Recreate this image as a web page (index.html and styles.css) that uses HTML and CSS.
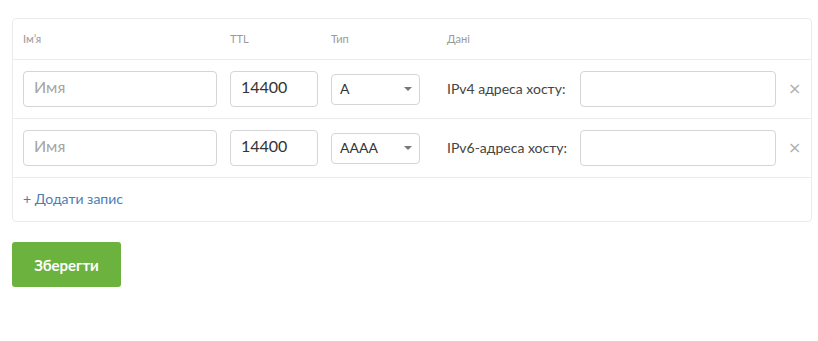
FILE: index.html
```html
<!DOCTYPE html>
<html>
<head>
  <meta charset="utf-8">
  <link rel="stylesheet" href="styles.css">
</head>
<body>
  <div class="records">
    <div class="records-head">
      <span>Ім’я</span>
      <span>TTL</span>
      <span>Тип</span>
      <span class="data-col">Дані</span>
    </div>

    <div class="record-row">
      <input class="field" type="text" placeholder="Имя">
      <input class="field" type="text" value="14400">
      <div class="type-select"><span>A</span><i class="caret"></i></div>
      <label class="data-label">IPv4 адреса хосту:</label>
      <input class="field" type="text">
      <button class="remove-btn">×</button>
    </div>

    <div class="record-row">
      <input class="field" type="text" placeholder="Имя">
      <input class="field" type="text" value="14400">
      <div class="type-select"><span>AAAA</span><i class="caret"></i></div>
      <label class="data-label">IPv6-адреса хосту:</label>
      <input class="field" type="text">
      <button class="remove-btn">×</button>
    </div>

    <div class="records-foot">
      <a class="add-link" href="#">+ Додати запис</a>
    </div>
  </div>

  <button class="save-btn">Зберегти</button>
</body>
</html>
```

FILE: styles.css
```css
body {
  font-family: Lato, "Open Sans", sans-serif;
  margin: 0;
  padding: 18px 6px 0 12px;
  background: #fff;
  color: #333;
}

.records {
  width: 800px;
  border: 1px solid #ebebeb;
  border-radius: 4px;
  box-sizing: border-box;
}

.records-head,
.record-row {
  display: grid;
  grid-template-columns: 194px 88px 89px 134px 196px 1fr;
  column-gap: 13px;
  align-items: center;
  padding: 0 0 0 10px;
  border-bottom: 1px solid #ebebeb;
}

.records-head {
  height: 41px;
  font-size: 11px;
  color: #9a9a9a;
  padding-bottom: 1px;
  box-sizing: border-box;
}

.data-col {
  padding-left: 14px;
}

.record-row {
  height: 58px;
}

.field {
  height: 36px;
  border: 1px solid #d5d5d5;
  border-radius: 4px;
  box-sizing: border-box;
  padding: 0 10px 6px;
  font-family: inherit;
  font-size: 16px;
  color: #333;
  outline: none;
}

.field::placeholder {
  color: #a5a5a5;
}

.type-select {
  height: 31px;
  border: 1px solid #d5d5d5;
  border-radius: 4px;
  box-sizing: border-box;
  display: flex;
  align-items: center;
  justify-content: space-between;
  padding: 0 7px 2px 8px;
  font-size: 14px;
  color: #333;
}

.caret {
  width: 0;
  height: 0;
  margin-top: 2px;
  border-left: 4px solid transparent;
  border-right: 4px solid transparent;
  border-top: 4px solid #777;
}

.data-label {
  padding-left: 14px;
  padding-bottom: 2px;
  font-size: 14px;
  color: #444;
}

.remove-btn {
  justify-self: start;
  margin-left: -1px;
  margin-bottom: 2px;
  border: none;
  background: none;
  padding: 0;
  font-family: "DejaVu Sans", sans-serif;
  font-size: 16px;
  color: #b0b0b0;
  cursor: pointer;
}

.records-foot {
  height: 43px;
  display: flex;
  align-items: center;
  padding: 0 0 3px 10px;
  box-sizing: border-box;
}

.add-link {
  font-size: 14px;
  color: #4c7db2;
  text-decoration: none;
}

.save-btn {
  margin-top: 20px;
  width: 109px;
  height: 45px;
  border: none;
  border-radius: 3px;
  background: #6bb23f;
  color: #fff;
  font-family: inherit;
  font-weight: 700;
  font-size: 15px;
  cursor: pointer;
}
```
